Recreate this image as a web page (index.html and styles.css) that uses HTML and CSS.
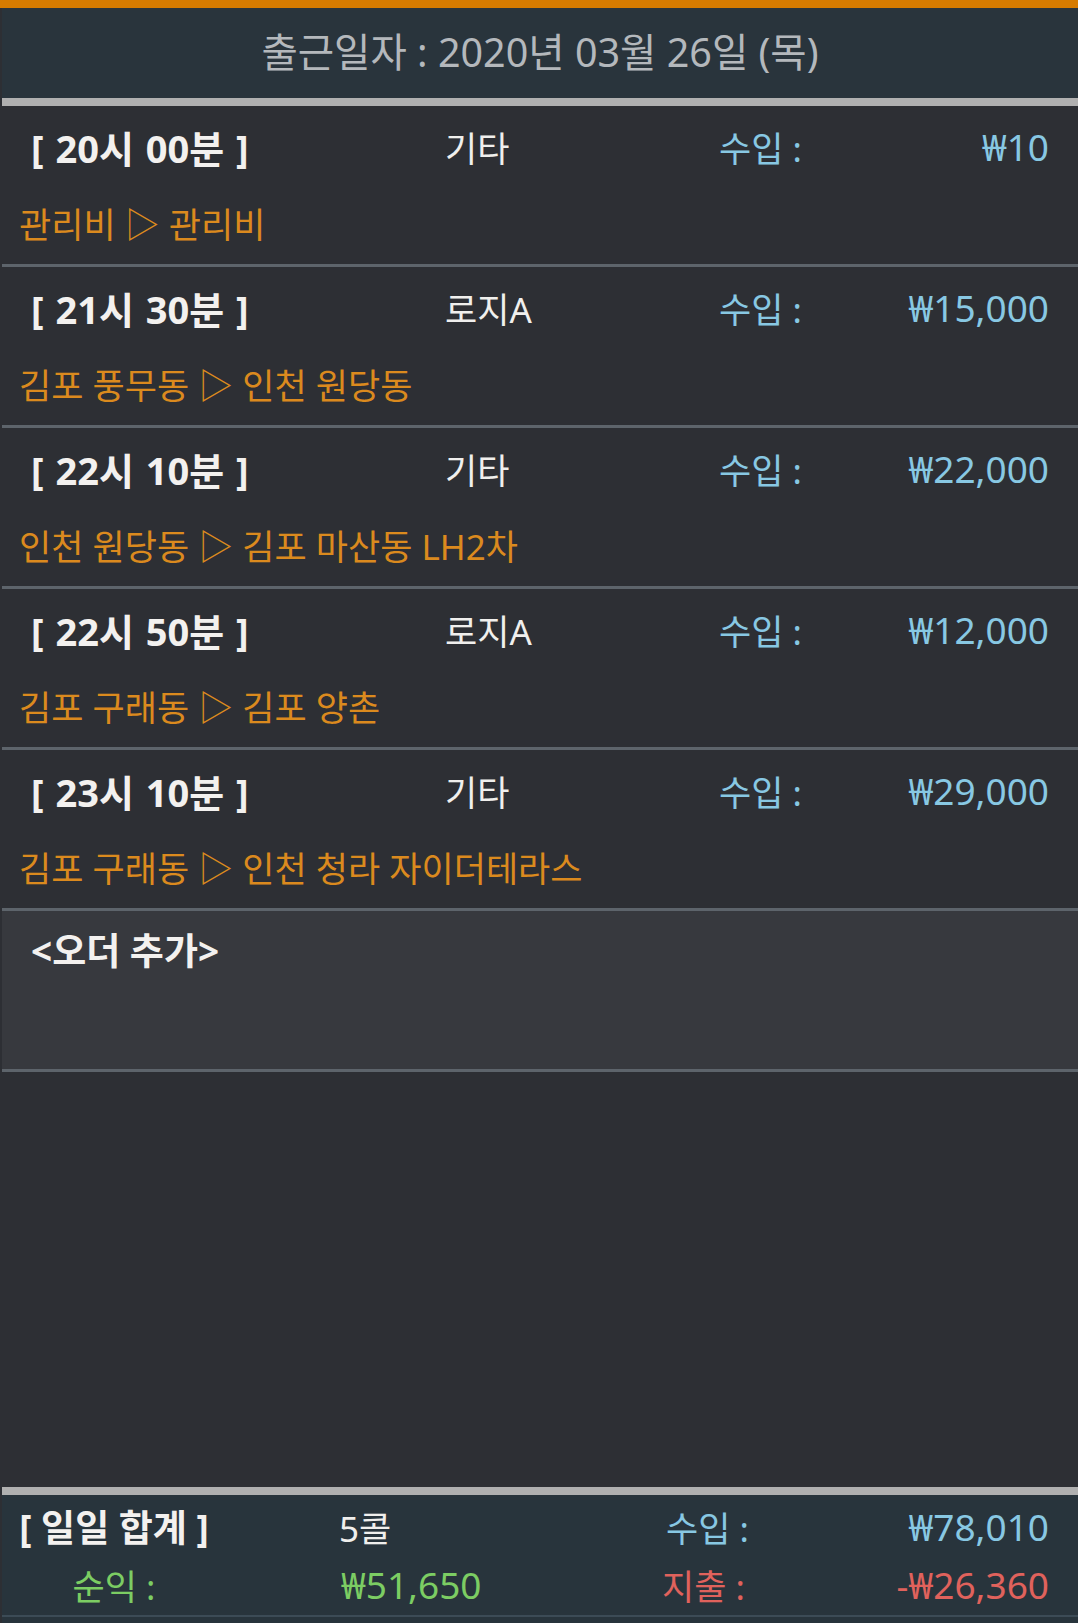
FILE: index.html
```html
<!DOCTYPE html>
<html lang="ko">
<head>
<meta charset="utf-8">
<title>출근일자</title>
<link rel="stylesheet" href="styles.css">
</head>
<body>
<div class="topbar"></div>
<div class="page">
  <header class="date-header">출근일자 : 2020년 03월 26일 (목)</header>
  <div class="list">
    <div class="order">
      <div class="line1">
        <span class="time">[ 20시 00분 ]</span>
        <span class="cat">기타</span>
        <span class="inc-label">수입 :</span>
        <span class="amount">₩10</span>
      </div>
      <div class="route">관리비 ▷ 관리비</div>
    </div>
    <div class="order">
      <div class="line1">
        <span class="time">[ 21시 30분 ]</span>
        <span class="cat">로지A</span>
        <span class="inc-label">수입 :</span>
        <span class="amount">₩15,000</span>
      </div>
      <div class="route">김포 풍무동 ▷ 인천 원당동</div>
    </div>
    <div class="order">
      <div class="line1">
        <span class="time">[ 22시 10분 ]</span>
        <span class="cat">기타</span>
        <span class="inc-label">수입 :</span>
        <span class="amount">₩22,000</span>
      </div>
      <div class="route">인천 원당동 ▷ 김포 마산동 LH2차</div>
    </div>
    <div class="order">
      <div class="line1">
        <span class="time">[ 22시 50분 ]</span>
        <span class="cat">로지A</span>
        <span class="inc-label">수입 :</span>
        <span class="amount">₩12,000</span>
      </div>
      <div class="route">김포 구래동 ▷ 김포 양촌</div>
    </div>
    <div class="order">
      <div class="line1">
        <span class="time">[ 23시 10분 ]</span>
        <span class="cat">기타</span>
        <span class="inc-label">수입 :</span>
        <span class="amount">₩29,000</span>
      </div>
      <div class="route">김포 구래동 ▷ 인천 청라 자이더테라스</div>
    </div>
    <div class="add-order">
      <span class="add-text">&lt;오더 추가&gt;</span>
    </div>
  </div>
  <div class="spacer"></div>
  <footer class="summary">
    <div class="sum-body">
      <div class="sum-row">
        <span class="sum-cell"><span class="sum-title">[ 일일 합계 ]</span></span>
        <span class="sum-count">5콜</span>
        <span class="sum-inc-label">수입 :</span>
        <span class="sum-inc">₩78,010</span>
      </div>
      <div class="sum-row">
        <span class="sum-cell"><span class="sum-net-label">순익 :</span></span>
        <span class="sum-net">₩51,650</span>
        <span class="sum-exp-label">지출 :</span>
        <span class="sum-exp">-₩26,360</span>
      </div>
    </div>
  </footer>
</div>
</body>
</html>
```

FILE: styles.css
```css
* { box-sizing: border-box; }
html, body {
  margin: 0;
  padding: 0;
  background: #2d2f34;
  font-family: "Noto Sans", "Noto Sans CJK KR", sans-serif;
}
body {
  width: 1078px;
  height: 1623px;
  overflow: hidden;
  white-space: nowrap;
}
.topbar {
  height: 8px;
  background: #d67b00;
}
.page {
  margin-left: 2px;
  display: flex;
  flex-direction: column;
  height: 1615px;
}
.date-header {
  height: 98px;
  background: #29343c;
  border-bottom: 8px solid #b0b0b0;
  color: #b4b8bc;
  font-size: 39.5px;
  line-height: 88px;
  text-align: center;
}
.list {
  display: flex;
  flex-direction: column;
}
.order {
  border-bottom: 3px solid #5d646b;
  height: 161px;
  padding: 0 29px 0 17px;
}
.line1 {
  display: grid;
  grid-template-columns: 426px 274px 1fr auto;
  align-items: center;
  height: 80px;
}
.time {
  padding-left: 12px;
  color: #f3f1ef;
  font-weight: 700;
  font-size: 38px;
  word-spacing: 2px;
}
.cat {
  color: #f0efed;
  font-size: 35px;
}
.inc-label {
  color: #88c8e3;
  font-size: 35px;
}
.amount {
  color: #88c8e3;
  font-size: 37px;
  text-align: right;
}
.route {
  height: 78px;
  line-height: 78px;
  color: #db8a1e;
  font-size: 35px;
}
.add-order {
  height: 161px;
  background: #37393e;
  border-bottom: 3px solid #5d646b;
  padding: 0 29px 0 29px;
}
.add-text {
  display: block;
  height: 80px;
  line-height: 80px;
  color: #f3f1ef;
  font-weight: 700;
  font-size: 37px;
}
.spacer {
  flex: 1;
}
.summary {
  background: #28343c;
  border-top: 8px solid #b0b0b0;
  padding-bottom: 6px;
}
.sum-body {
  border-bottom: 2px solid #3c4b56;
  padding: 2px 29px 2px 24px;
}
.sum-row {
  display: grid;
  grid-template-columns: 306px 330px 1fr auto;
  align-items: center;
  height: 58px;
}
.sum-cell {
  display: flex;
  justify-content: center;
  width: 176px;
}
.sum-title {
  color: #f3f1ef;
  font-weight: 700;
  font-size: 37px;
}
.sum-count {
  padding-left: 7px;
  color: #f0efed;
  font-size: 35px;
}
.sum-inc-label {
  padding-left: 4px;
  color: #88c8e3;
  font-size: 35px;
}
.sum-inc {
  color: #88c8e3;
  font-size: 37px;
  text-align: right;
}
.sum-net-label {
  color: #7ccd63;
  font-size: 35px;
}
.sum-net {
  padding-left: 9px;
  color: #7ccd63;
  font-size: 37px;
}
.sum-exp-label {
  color: #e0625c;
  font-size: 35px;
}
.sum-exp {
  color: #e0625c;
  font-size: 37px;
  text-align: right;
}
```
